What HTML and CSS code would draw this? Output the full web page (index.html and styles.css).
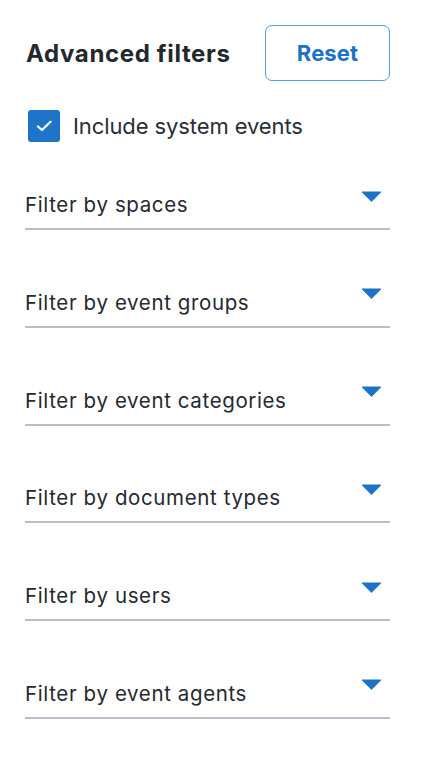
FILE: index.html
```html
<!DOCTYPE html>
<html lang="en">
<head>
<meta charset="utf-8">
<title>Advanced filters</title>
<link rel="stylesheet" href="styles.css">
</head>
<body>
<div class="panel">
  <div class="header">
    <h2 class="title">Advanced filters</h2>
    <button class="reset" type="button">Reset</button>
  </div>
  <label class="check">
    <span class="box">
      <svg width="16" height="12" viewBox="0 0 16 12"><path d="M2 6.5 L6 10 L14.5 1.8" fill="none" stroke="#fff" stroke-width="2.2" stroke-linecap="round" stroke-linejoin="round"/></svg>
    </span>
    <span class="check-label">Include system events</span>
  </label>
  <div class="fields">
    <div class="field"><span class="field-label">Filter by spaces</span><svg class="caret" width="21" height="11" viewBox="0 0 21 11"><path d="M1.5 1 L19.5 1 L10.5 10 Z" fill="#1b73c8" stroke="#1b73c8" stroke-width="1.2" stroke-linejoin="round"/></svg></div>
    <div class="field"><span class="field-label">Filter by event groups</span><svg class="caret" width="21" height="11" viewBox="0 0 21 11"><path d="M1.5 1 L19.5 1 L10.5 10 Z" fill="#1b73c8" stroke="#1b73c8" stroke-width="1.2" stroke-linejoin="round"/></svg></div>
    <div class="field"><span class="field-label">Filter by event categories</span><svg class="caret" width="21" height="11" viewBox="0 0 21 11"><path d="M1.5 1 L19.5 1 L10.5 10 Z" fill="#1b73c8" stroke="#1b73c8" stroke-width="1.2" stroke-linejoin="round"/></svg></div>
    <div class="field"><span class="field-label">Filter by document types</span><svg class="caret" width="21" height="11" viewBox="0 0 21 11"><path d="M1.5 1 L19.5 1 L10.5 10 Z" fill="#1b73c8" stroke="#1b73c8" stroke-width="1.2" stroke-linejoin="round"/></svg></div>
    <div class="field"><span class="field-label">Filter by users</span><svg class="caret" width="21" height="11" viewBox="0 0 21 11"><path d="M1.5 1 L19.5 1 L10.5 10 Z" fill="#1b73c8" stroke="#1b73c8" stroke-width="1.2" stroke-linejoin="round"/></svg></div>
    <div class="field"><span class="field-label">Filter by event agents</span><svg class="caret" width="21" height="11" viewBox="0 0 21 11"><path d="M1.5 1 L19.5 1 L10.5 10 Z" fill="#1b73c8" stroke="#1b73c8" stroke-width="1.2" stroke-linejoin="round"/></svg></div>
  </div>
</div>
</body>
</html>
```
FILE: styles.css
```css
html, body {
  margin: 0;
  padding: 0;
  background: #ffffff;
}
body {
  font-family: Inter, "Noto Sans", "Liberation Sans", sans-serif;
  color: #23272f;
}
.panel {
  padding: 25px 51px 0 25px;
  display: flex;
  flex-direction: column;
}
.header {
  display: flex;
  justify-content: space-between;
  align-items: center;
  height: 56px;
}
.title {
  margin: 0 0 0 1px;
  font-size: 24px;
  font-weight: 700;
  color: #23272e;
  letter-spacing: 0.65px;
}
.reset {
  width: 125px;
  height: 56px;
  box-sizing: border-box;
  border: 1.5px solid #4d9ee2;
  border-radius: 7px;
  background: #fff;
  color: #1c72c6;
  font-family: inherit;
  font-size: 22px;
  font-weight: 700;
  letter-spacing: 0.1px;
  padding: 0;
}
.check {
  margin-top: 29px;
  display: flex;
  align-items: center;
  gap: 13px;
  padding-left: 3px;
}
.box {
  width: 32px;
  height: 32px;
  border-radius: 3px;
  background: #1e74c9;
  display: flex;
  align-items: center;
  justify-content: center;
}
.check-label {
  font-size: 22px;
  color: #2a2e35;
  letter-spacing: -0.1px;
}
.fields {
  margin-top: 30px;
  display: flex;
  flex-direction: column;
  gap: 39.8px;
}
.field {
  height: 58px;
  box-sizing: border-box;
  border-bottom: 2px solid #b9bdc9;
  padding: 18.5px 8px 0 0;
  display: flex;
  justify-content: space-between;
  align-items: flex-start;
}
.field-label {
  margin-top: 2.5px;
  font-size: 20.5px;
  line-height: 24px;
  letter-spacing: 0.62px;
  color: #252930;
}
.caret {
  display: block;
}
```
